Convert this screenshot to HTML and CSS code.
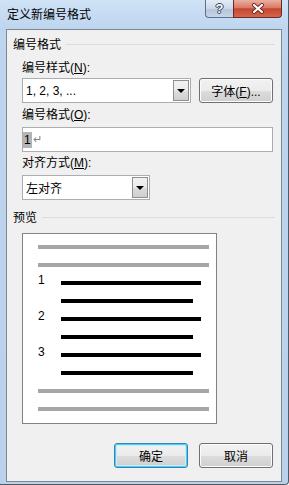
FILE: index.html
```html
<!DOCTYPE html>
<html>
<head>
  <title>定义新编号格式</title>
  <link rel="stylesheet" href="styles.css">
</head>
<body>
  <div class="window">
    <div class="titlebar">
      <span class="title">定义新编号格式</span>
      <div class="caption-buttons">
        <span class="cap-btn help">?</span>
        <span class="cap-btn close">
          <svg width="14" height="11" viewBox="0 0 14 11">
            <path d="M3 2 L11 9 M11 2 L3 9" stroke="#6b2a22" stroke-width="4" stroke-linecap="round"/>
            <path d="M3 2 L11 9 M11 2 L3 9" stroke="#ffffff" stroke-width="2.2" stroke-linecap="round"/>
          </svg>
        </span>
      </div>
    </div>

    <div class="client">
      <div class="group-title first">编号格式</div>

      <div class="fields">
        <div class="label label-n">编号样式(<u>N</u>):</div>
        <div class="row">
          <div class="combo combo-wide">
            <span class="combo-text">1, 2, 3, ...</span>
            <span class="drop"></span>
          </div>
          <button class="btn">字体(<u>F</u>)...</button>
        </div>

        <div class="label">编号格式(<u>O</u>):</div>
        <div class="textbox"><span class="sel">1</span><span class="ret">↵</span></div>

        <div class="label label-m">对齐方式(<u>M</u>):</div>
        <div class="combo combo-narrow">
          <span class="combo-text">左对齐</span>
          <span class="drop"></span>
        </div>
      </div>

      <div class="group-title second">预览</div>

      <div class="fields">
        <div class="preview">
          <div class="pline gray"></div>
          <div class="pline gray"></div>
          <div class="item"><span class="num">1</span><span class="bar long"></span></div>
          <div class="item"><span class="num"></span><span class="bar short"></span></div>
          <div class="item"><span class="num">2</span><span class="bar long"></span></div>
          <div class="item"><span class="num"></span><span class="bar short"></span></div>
          <div class="item"><span class="num">3</span><span class="bar long"></span></div>
          <div class="item"><span class="num"></span><span class="bar short"></span></div>
          <div class="pline gray"></div>
          <div class="pline gray"></div>
        </div>
      </div>

      <div class="actions">
        <button class="btn default">确定</button>
        <button class="btn">取消</button>
      </div>
    </div>
  </div>
</body>
</html>
```

FILE: styles.css
```css
* {
  box-sizing: border-box;
}

body {
  margin: 0;
  font-family: "Liberation Sans", "Noto Sans CJK SC", sans-serif;
  font-size: 12px;
  color: #000;
}

.window {
  width: 289px;
  height: 485px;
  display: flex;
  flex-direction: column;
  padding: 0 6px 2px 6px;
  background: linear-gradient(#cfe2f6, #bdd5ef 30px, #b9d1ea);
  border-right: 1px solid #4f5b68;
  border-bottom: 1px solid #4f5b68;
  border-bottom-right-radius: 4px;
}

.titlebar {
  height: 29px;
  display: flex;
  align-items: flex-start;
  padding-left: 1px;
}

.title {
  line-height: 14px;
  margin-top: 8px;
  flex: 1;
}

.caption-buttons {
  display: flex;
}

.cap-btn {
  height: 18px;
  display: flex;
  align-items: center;
  justify-content: center;
  border: 1px solid #5e7189;
  border-top: none;
}

.help {
  width: 28px;
  border-right: none;
  border-bottom-left-radius: 4px;
  background: linear-gradient(#e3ecf6, #cbd9ea 50%, #b3c5da 51%, #c6d6e8);
  color: #fff;
  font-weight: bold;
  font-size: 13px;
  text-shadow: 0 0 1px #223, 1px 0 0 #3d4e63, -1px 0 0 #3d4e63, 0 1px 0 #3d4e63, 0 -1px 0 #3d4e63;
}

.close {
  width: 49px;
  border-color: #6e2a22;
  border-bottom-right-radius: 4px;
  background: linear-gradient(#eab0a2, #d97a66 45%, #c6462f 52%, #d5654d);
}

.client {
  flex: 1;
  background: #f0f0f0;
  border: 1px solid #828790;
  padding: 0 6px;
  display: flex;
  flex-direction: column;
}

.group-title {
  display: flex;
  align-items: center;
  line-height: 14px;
  gap: 5px;
}

.group-title::after {
  content: "";
  flex: 1;
  height: 1px;
  background: #d5dfe5;
  margin-top: -1px;
}

.group-title.first {
  margin-top: 8px;
}

.group-title.second {
  margin-top: 11px;
}

.fields {
  margin-left: 9px;
  width: 251px;
  display: flex;
  flex-direction: column;
  align-items: flex-start;
}

.label {
  line-height: 14px;
  margin-top: 5px;
}

.label-n {
  margin-top: 9px;
}

.label-m {
  margin-top: 4px;
}

u {
  text-decoration: underline;
}

.row {
  margin-top: 3px;
  display: flex;
  gap: 8px;
  width: 100%;
}

.combo {
  height: 25px;
  background: #fff;
  border: 1px solid #abadb3;
  display: flex;
  align-items: center;
  padding: 1px;
  margin-top: 5px;
}

.row .combo {
  margin-top: 0;
}

.combo-wide {
  width: 169px;
}

.combo-narrow {
  width: 128px;
}

.combo-text {
  flex: 1;
  padding-left: 2px;
}

.drop {
  width: 16px;
  height: 100%;
  border: 1px solid #8e8f8f;
  background: linear-gradient(#f2f2f2, #ebebeb 50%, #dddddd 51%, #cfcfcf);
  display: flex;
  align-items: center;
  justify-content: center;
}

.drop::after {
  content: "";
  border-left: 4px solid transparent;
  border-right: 4px solid transparent;
  border-top: 4px solid #000;
}

.textbox {
  margin-top: 5px;
  width: 251px;
  height: 25px;
  background: #fff;
  border: 1px solid #abadb3;
  display: flex;
  align-items: center;
  padding-left: 0;
}

.sel {
  background: #b4b4b4;
  padding: 0 1px;
  line-height: 16px;
}

.ret {
  color: #808080;
  font-size: 11px;
  margin-left: 1px;
}

.btn {
  width: 74px;
  height: 25px;
  font: inherit;
  color: #000;
  border: 1px solid #707070;
  border-radius: 3px;
  background: linear-gradient(#f2f2f2, #ebebeb 50%, #dddddd 51%, #cfcfcf);
  box-shadow: inset 0 0 0 1px #fcfcfc;
  padding: 0;
}

.btn.default {
  border-color: #3c7fb1;
  box-shadow: inset 0 0 0 1px #48d1f5, inset 0 0 0 2px #c8eefb;
}

.preview {
  margin-top: 8px;
  width: 195px;
  height: 191px;
  background: #fff;
  border: 1px solid #828282;
  padding: 11px 0 0 15px;
  display: flex;
  flex-direction: column;
  gap: 14px;
}

.pline {
  height: 4px;
  width: 171px;
  background: #a6a6a6;
}

.item {
  height: 4px;
  display: flex;
  align-items: center;
}

.num {
  width: 23px;
  line-height: 14px;
  margin-bottom: 6px;
}

.bar {
  height: 4px;
  background: #000;
}

.bar.long {
  width: 140px;
}

.bar.short {
  width: 132px;
}

.actions {
  margin-top: 19px;
  margin-right: 2px;
  display: flex;
  justify-content: flex-end;
  gap: 11px;
}
```
